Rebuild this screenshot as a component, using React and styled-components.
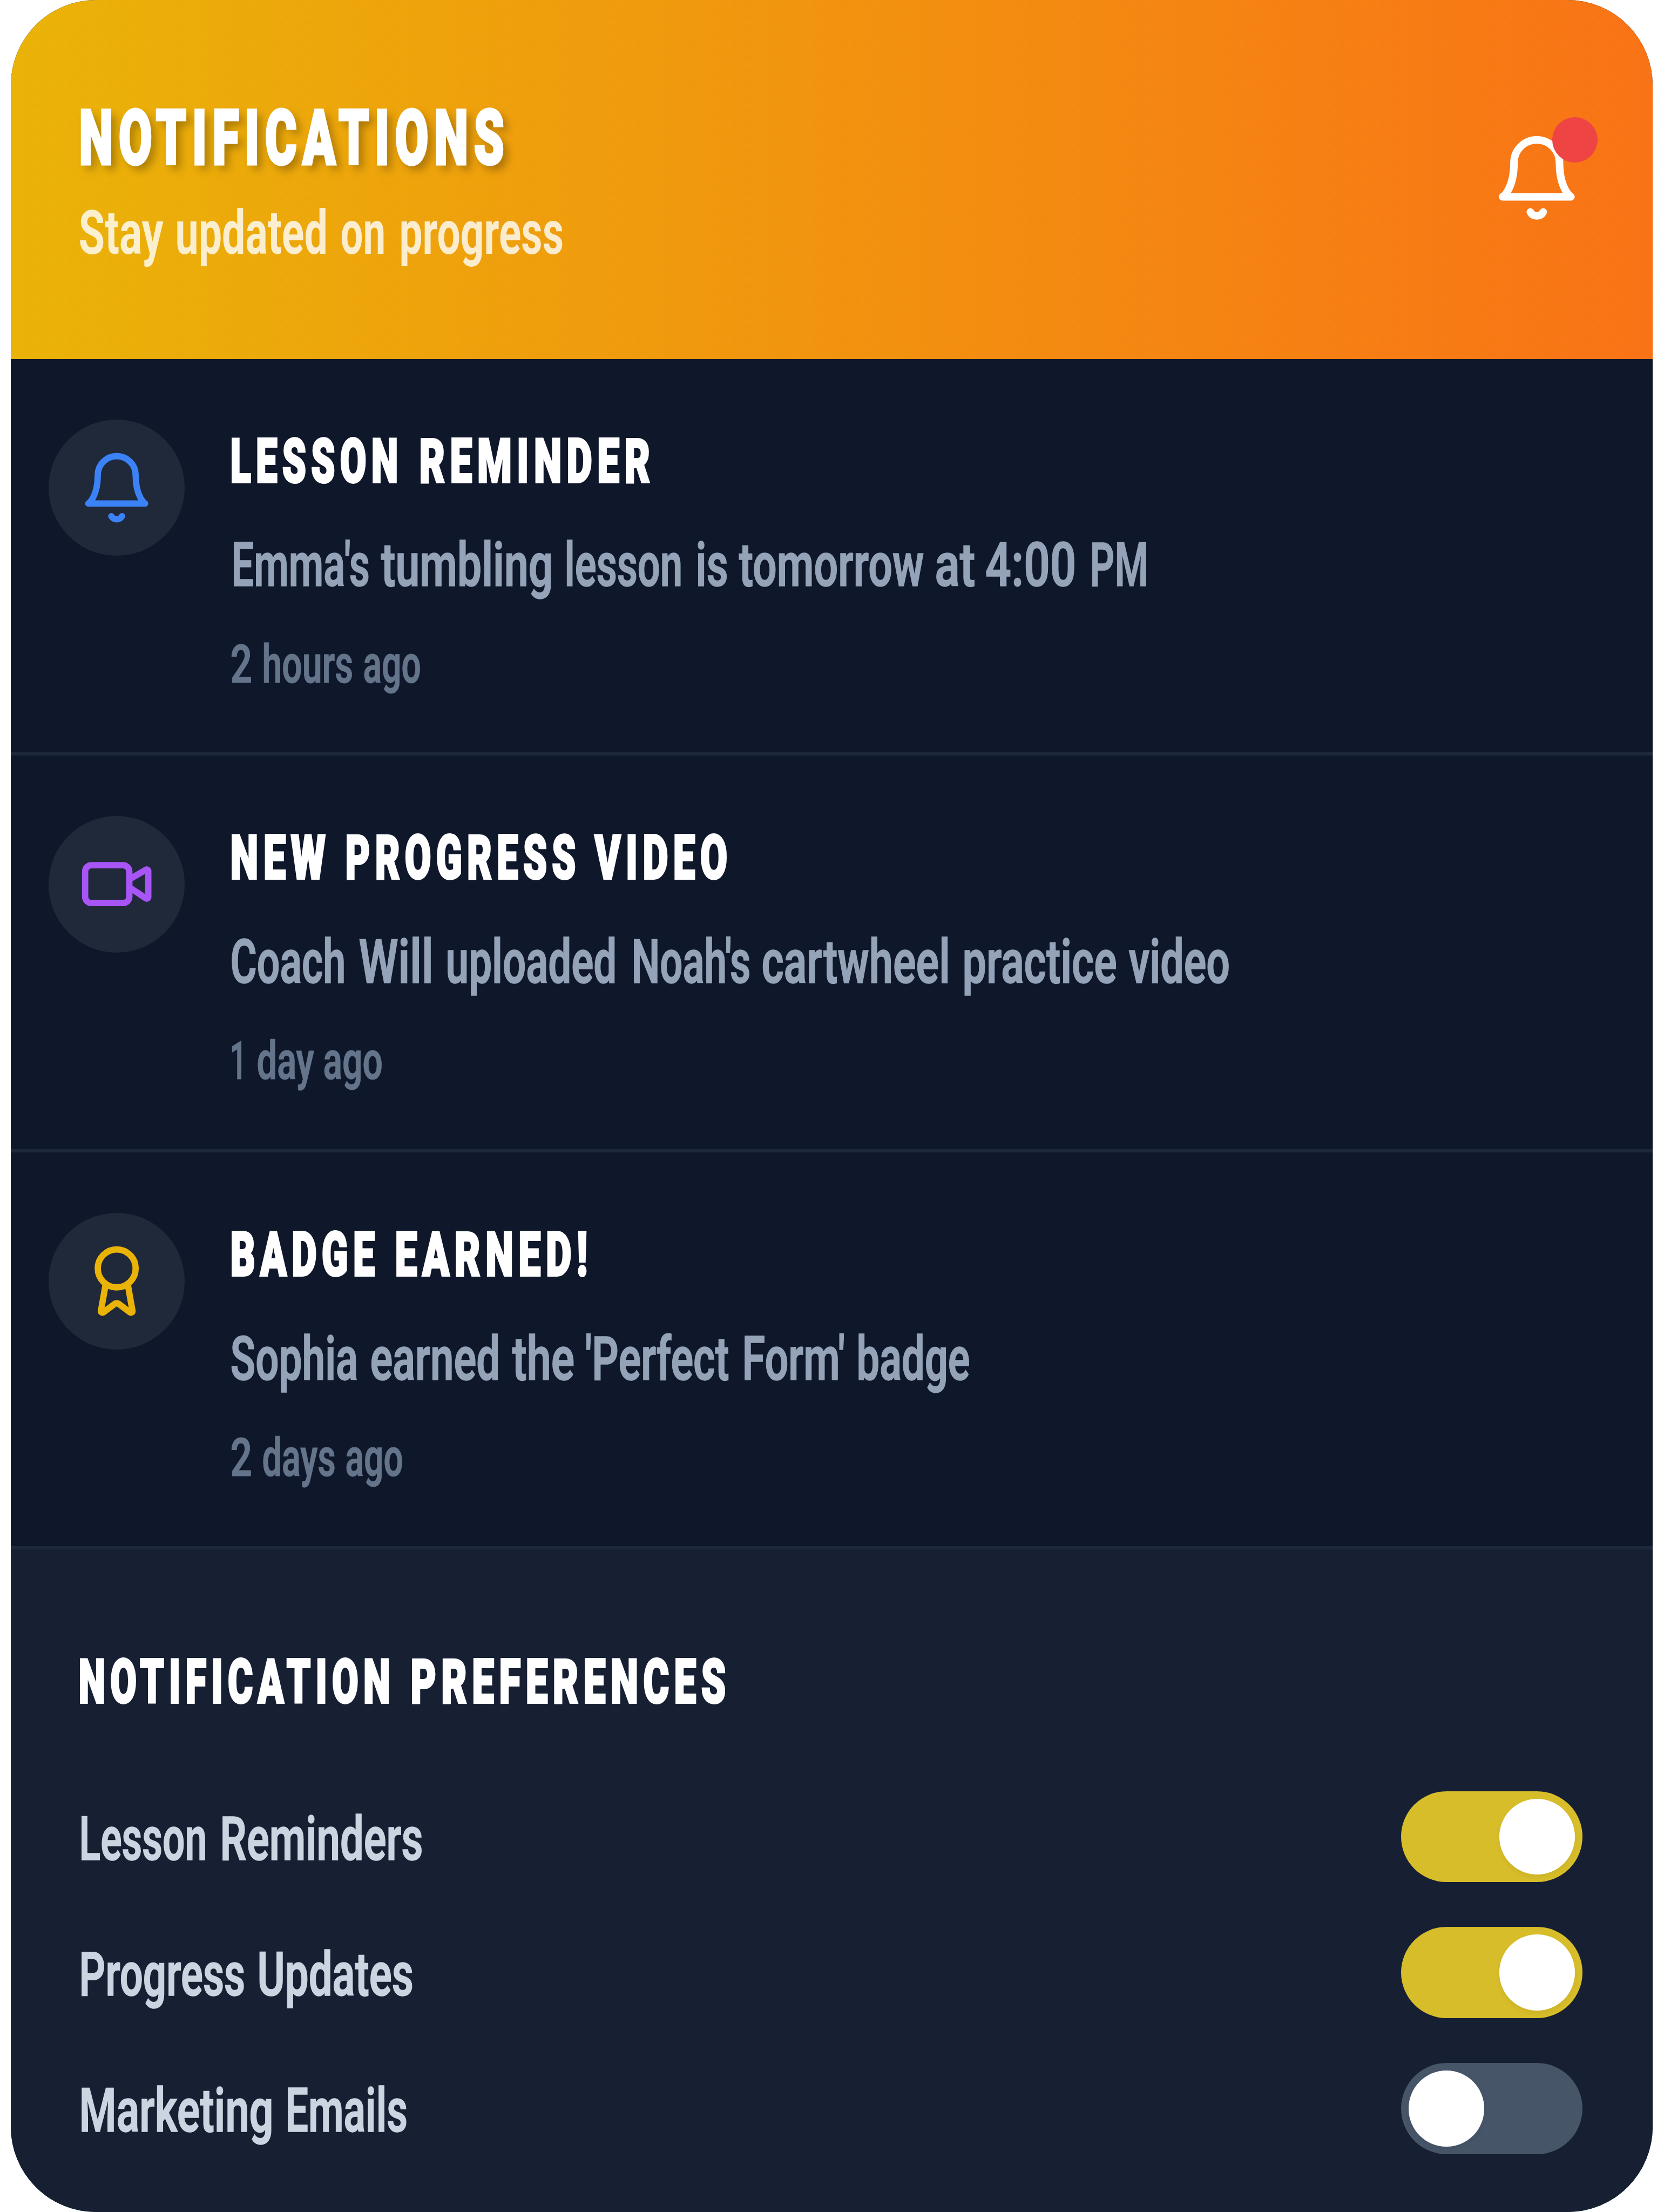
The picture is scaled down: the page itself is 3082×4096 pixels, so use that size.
import React, { useLayoutEffect, useRef, useState } from "react";
import styled, { createGlobalStyle } from "styled-components";

const SCALE = 0.98624;
const u = (n) => `${(n * SCALE).toFixed(2)}px`;

const GlobalStyle = createGlobalStyle`
  *, *::before, *::after { box-sizing: border-box; }
  html, body { margin: 0; padding: 0; background: #ffffff; }
  body { font-family: Roboto, "Liberation Sans", sans-serif; overflow: hidden; }
`;

const Page = styled.div`
  width: 3082px;
  height: 4096px;
  padding: 0 ${u(21)} 0 ${u(20)};
`;

const Card = styled.main`
  height: 100%;
  display: flex;
  flex-direction: column;
  overflow: hidden;
  border-radius: ${u(160)};
  background: #0f172a;
`;

const Header = styled.header`
  flex: none;
  height: ${u(674)};
  padding: ${u(171)} ${u(132)} 0 ${u(130)};
  display: flex;
  justify-content: space-between;
  align-items: flex-start;
  background: linear-gradient(to right, #eab308, #f97316);
`;

const BellHolder = styled.div`
  position: relative;
  margin-top: ${u(77)};
  width: ${u(171)};
  height: ${u(171)};
  color: #ffffff;
`;

const UnreadDot = styled.span`
  position: absolute;
  top: ${u(-28)};
  right: ${u(-28)};
  width: ${u(85.3)};
  height: ${u(85.3)};
  border-radius: 50%;
  background: #ef4444;
`;

const Svg = styled.svg`
  display: block;
  width: ${(p) => u(p.$size)};
  height: ${(p) => u(p.$size)};
  fill: none;
  stroke: currentColor;
  stroke-width: 2;
  stroke-linecap: round;
  stroke-linejoin: round;
`;

const Line = styled.div`
  display: flex;
  height: ${(p) => u(p.$line)};
  line-height: ${(p) => u(p.$line)};
  font-size: ${(p) => u(p.$size)};
  font-weight: ${(p) => p.$weight || 600};
  letter-spacing: ${(p) => p.$spacing || 0}em;
  color: ${(p) => p.$color};
  text-shadow: ${(p) => p.$shadow || "none"};
  -webkit-text-stroke: ${(p) => p.$stroke || 0}px ${(p) => p.$color};
  margin-top: ${(p) => u(p.$top || 0)};
  white-space: nowrap;
`;

const WordBox = styled.span`
  flex: none;
  width: ${(p) => u(p.$width)};
  margin-left: ${(p) => u(p.$gap)};
`;

const Squeezed = styled.span`
  display: inline-block;
  transform-origin: left center;
`;

const BEARING = 2.5;

// One word, condensed horizontally to the width of its box.
function Word({ text, width, gap }) {
  const ref = useRef(null);
  const [scale, setScale] = useState(1);
  useLayoutEffect(() => {
    const el = ref.current;
    const spacing = parseFloat(getComputedStyle(el).letterSpacing) || 0;
    setScale(((width + BEARING * 2) * SCALE) / (el.offsetWidth - spacing));
  }, [width, text]);
  return (
    <WordBox $width={width} $gap={gap}>
      <Squeezed ref={ref} style={{ transform: `translateX(${-BEARING}px) scaleX(${scale})` }}>
        {text}
      </Squeezed>
    </WordBox>
  );
}

// A line of condensed words; spans holds the start and end of each word.
function Condensed({ text, spans, ...rest }) {
  return (
    <Line {...rest}>
      {text.split(" ").map((word, i) => (
        <Word
          key={i}
          text={word}
          width={spans[i][1] - spans[i][0]}
          gap={spans[i][0] - (i ? spans[i - 1][1] : 0)}
        />
      ))}
    </Line>
  );
}

function Heading(props) {
  return <Condensed $size={115} $line={140} $weight={900} $spacing={0.13} $stroke={4} $color="#ffffff" {...props} />;
}

const HeaderText = styled.div`
  width: ${u(1200)};
`;

const Row = styled.article`
  flex: none;
  height: ${u(745)};
  display: flex;
  align-items: flex-start;
  gap: ${u(88)};
  padding: ${u(113.5)} ${u(71)} 0 ${u(71)};
  border-bottom: 6px solid #1e283b;
`;

const IconDisc = styled.div`
  flex: none;
  width: ${u(256)};
  height: ${u(256)};
  border-radius: 50%;
  display: flex;
  align-items: center;
  justify-content: center;
  background: #20293a;
  color: ${(p) => p.$color};
`;

const RowBody = styled.div`
  width: ${u(2300)};
`;

const Preferences = styled.section`
  flex: 1;
  padding: ${u(180)} ${u(132)} 0 ${u(130)};
  background: #172033;
`;

const PreferenceList = styled.div`
  display: flex;
  flex-direction: column;
  gap: ${u(84.3)};
  margin-top: ${u(134)};
`;

const Preference = styled.div`
  display: flex;
  justify-content: space-between;
  height: ${u(171)};
`;

const Toggle = styled.div`
  width: ${u(341.3)};
  height: ${u(171)};
  padding: ${u(14.2)};
  border-radius: ${u(86)};
  display: flex;
  justify-content: ${(p) => (p.$on ? "flex-end" : "flex-start")};
  background: ${(p) => (p.$on ? "#d7bd2a" : "#475569")};
`;

const Knob = styled.span`
  width: ${u(142.6)};
  height: ${u(142.6)};
  border-radius: 50%;
  background: #ffffff;
  box-shadow: 0 5px 10px rgba(0, 0, 0, 0.05);
`;

const Bell = ({ size }) => (
  <Svg viewBox="0 0 24 24" $size={size}>
    <path d="M6 8a6 6 0 0 1 12 0c0 7 3 9 3 9H3s3-2 3-9" />
    <path d="M10.3 21a1.94 1.94 0 0 0 3.4 0" />
  </Svg>
);

const Video = ({ size }) => (
  <Svg viewBox="0 0 24 24" $size={size}>
    <path d="m16 13 5.223 3.482a.5.5 0 0 0 .777-.416V7.87a.5.5 0 0 0-.752-.432L16 10.5" />
    <rect x="2" y="6" width="14" height="12" rx="2" />
  </Svg>
);

const Award = ({ size }) => (
  <Svg viewBox="0 0 24 24" $size={size}>
    <path d="m15.477 12.89 1.515 8.526a.5.5 0 0 1-.81.47l-3.58-2.687a1 1 0 0 0-1.197 0l-3.586 2.686a.5.5 0 0 1-.81-.469l1.514-8.526" />
    <circle cx="12" cy="8" r="6" />
  </Svg>
);

const notifications = [
  {
    Icon: Bell,
    color: "#3b82f6",
    title: { text: "LESSON REMINDER", spans: [[0, 310], [355, 784]] },
    body: {
      text: "Emma's tumbling lesson is tomorrow at 4:00 PM",
      spans: [[2, 257], [283, 601], [628, 845], [874, 930], [955, 1298], [1323, 1394], [1418, 1584], [1614, 1719]],
    },
    time: { text: "2 hours ago", spans: [[0, 36], [60, 226], [249, 353]] },
  },
  {
    Icon: Video,
    color: "#a855f7",
    title: { text: "NEW PROGRESS VIDEO", spans: [[0, 174], [216, 644], [684, 928]] },
    body: {
      text: "Coach Will uploaded Noah's cartwheel practice video",
      spans: [[0, 212], [241, 376], [405, 721], [753, 972], [998, 1347], [1375, 1660], [1687, 1872]],
    },
    time: { text: "1 day ago", spans: [[-1, 26], [50, 153], [174, 281]] },
  },
  {
    Icon: Award,
    color: "#eab308",
    title: { text: "BADGE EARNED!", spans: [[0, 266], [309, 666]] },
    body: {
      text: "Sophia earned the 'Perfect Form' badge",
      spans: [[0, 235], [263, 502], [529, 641], [666, 932], [961, 1149], [1176, 1384]],
    },
    time: { text: "2 days ago", spans: [[0, 36], [60, 193], [216, 320]] },
  },
];

const preferences = [
  { text: "Lesson Reminders", spans: [[1, 236], [266, 642]], on: true },
  { text: "Progress Updates", spans: [[1, 308], [336, 624]], on: true },
  { text: "Marketing Emails", spans: [[1, 361], [388, 613]], on: false },
];

export default function App() {
  return (
    <>
      <GlobalStyle />
      <Page>
        <Card>
          <Header>
            <HeaderText>
              <Heading
                text="NOTIFICATIONS"
                spans={[[1, 794]]}
                $size={143}
                $line={170}
                $top={3}
                $spacing={0.12}
                $stroke={5}
                $shadow="14px 10px 20px rgba(0,0,0,0.3)"
              />
              <Condensed
                text="Stay updated on progress"
                spans={[[0, 154], [182, 463], [492, 572], [602, 906]]}
                $size={115}
                $line={120}
                $top={34}
                $weight={700}
                $color="rgba(255,255,255,0.8)"
              />
            </HeaderText>
            <BellHolder>
              <Bell size={171} />
              <UnreadDot />
            </BellHolder>
          </Header>

          {notifications.map(({ Icon, color, title, body, time }) => (
            <Row key={title.text}>
              <IconDisc $color={color}>
                <Icon size={142.3} />
              </IconDisc>
              <RowBody>
                <Heading {...title} $top={9} />
                <Condensed {...body} $size={115} $line={120} $top={65.5} $stroke={1.5} $color="#94a3b8" />
                <Condensed {...time} $size={100} $line={110} $top={71} $stroke={1} $color="#64748b" />
              </RowBody>
            </Row>
          ))}

          <Preferences>
            <Heading text="NOTIFICATION PREFERENCES" spans={[[0, 580], [624, 1211]]} />
            <PreferenceList>
              {preferences.map(({ text, spans, on }) => (
                <Preference key={text}>
                  <Condensed text={text} spans={spans} $size={115} $line={171} $top={5} $stroke={1.5} $color="#cbd5e1" />
                  <Toggle $on={on}>
                    <Knob />
                  </Toggle>
                </Preference>
              ))}
            </PreferenceList>
          </Preferences>
        </Card>
      </Page>
    </>
  );
}
